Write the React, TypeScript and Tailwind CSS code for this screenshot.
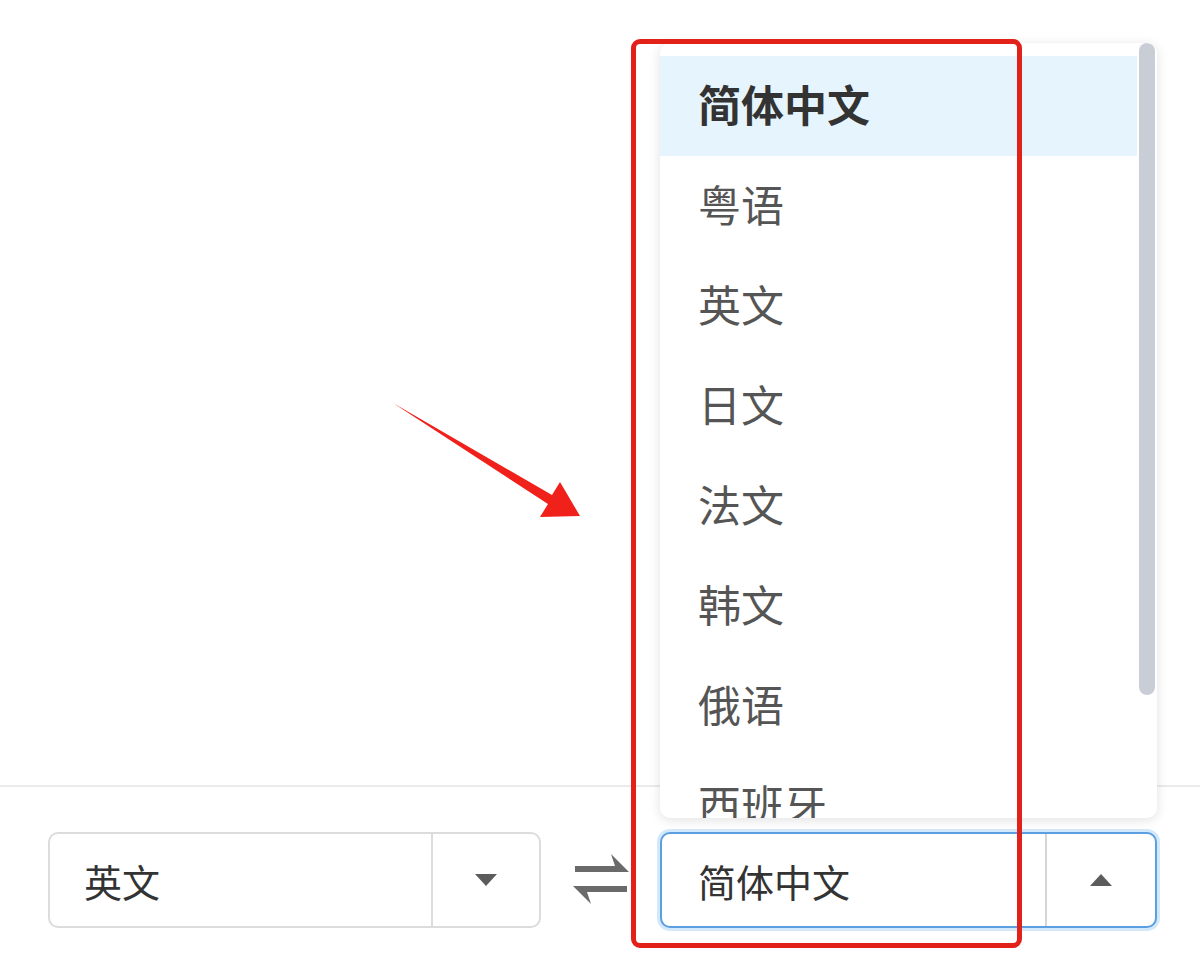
import React from "react";

const items = ["简体中文", "粤语", "英文", "日文", "法文", "韩文", "俄语", "西班牙"];
const font = { fontFamily: '"Noto Sans CJK SC", "Noto Sans", sans-serif' };

export default function App() {
  return (
    <div className="relative w-[1200px] h-[958px] bg-white overflow-hidden" style={font}>
      <div className="h-[785px]" />
      <div className="border-t-2 border-[#ebebeb] flex items-start pl-[48px] pt-[45px]">
        {/* Left select */}
        <div className="flex w-[493px] h-[96px] rounded-[10px] border-2 border-[#dcdcdc] bg-white">
          <div className="flex-1 flex items-center pl-[34px] text-[38px] text-[#333]">英文</div>
          <div className="w-[108px] border-l-2 border-[#dcdcdc] flex items-center justify-center">
            <svg width="24" height="14" viewBox="0 0 24 14"><polygon points="1,1 23,1 12,13" fill="#5c5c5c" /></svg>
          </div>
        </div>
        {/* swap icon */}
        <div className="w-[119px] h-[96px] flex items-center justify-center">
          <svg width="56" height="54" viewBox="0 0 56 54">
            <polygon points="2,13 42,13 38,1 56,19 2,19" fill="#6a6a6a" />
            <polygon points="54,39 14,39 18,51 0,33 54,33" fill="#6a6a6a" />
          </svg>
        </div>
        {/* Right select */}
        <div className="flex w-[497px] h-[96px] rounded-[10px] border-2 border-[#5b9fe0] bg-white shadow-[0_0_0_3px_#d3e8fb]">
          <div className="flex-1 flex items-center pl-[36px] text-[38px] text-[#333]">简体中文</div>
          <div className="w-[110px] border-l-2 border-[#d5d5d5] flex items-center justify-center">
            <svg width="24" height="14" viewBox="0 0 24 14"><polygon points="1,13 23,13 12,1" fill="#5c5c5c" /></svg>
          </div>
        </div>
      </div>

      {/* Dropdown menu */}
      <div className="absolute left-[660px] top-[43px] w-[497px] h-[775px] rounded-[10px] bg-white shadow-[0_2px_12px_rgba(0,0,0,0.12)] overflow-hidden">
        <div className="pt-[13px] pr-[20px]">
          {items.map((t, i) => (
            <div
              key={t}
              className={
                i === 0
                  ? "h-[100px] flex items-center pl-[38px] pb-[6px] text-[43px] font-bold text-[#333] bg-[#e6f5fd]"
                  : "h-[100px] flex items-center pl-[38px] pb-[6px] text-[43px] text-[#555]"
              }
            >
              {t}
            </div>
          ))}
        </div>
        <div className="absolute right-[2px] top-[0px] w-[16px] h-[652px] rounded-full bg-[#c9cdd6]" />
      </div>

      {/* Red highlight rectangle */}
      <div className="absolute left-[631px] top-[39px] w-[391px] h-[909px] rounded-[9px] border-[5px] border-[#e3211b]" />

      {/* Red arrow */}
      <svg className="absolute left-0 top-0" width="1200" height="958" viewBox="0 0 1200 958">
        <polygon points="393,403 552,495 560,482 580,516 540,517 548,504" fill="#f0201a" />
      </svg>
    </div>
  );
}
